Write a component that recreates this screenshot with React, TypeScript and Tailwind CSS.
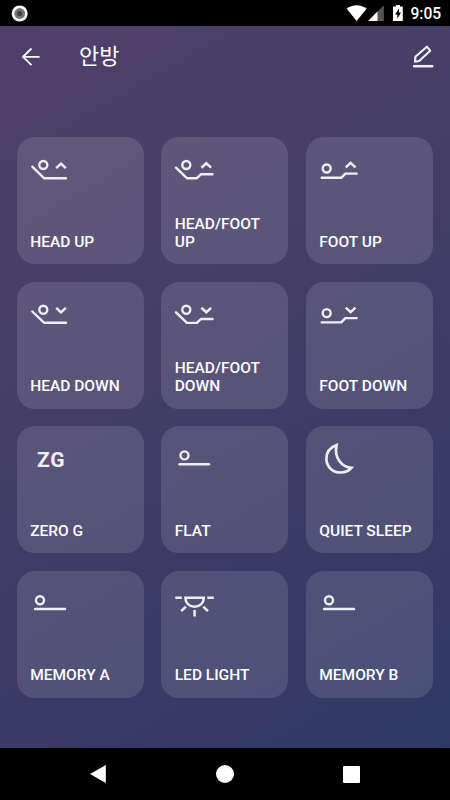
import React from "react";

interface Preset {
  label: string;
  icon: React.ReactNode;
}

interface BedIconProps {
  line: string;
  head: [number, number];
  chevron?: string;
}

const IconFrame: React.FC<{ children: React.ReactNode }> = ({ children }) => (
  <svg
    width="48"
    height="40"
    viewBox="0 0 48 40"
    fill="none"
    stroke="#efedf4"
    strokeWidth="2.4"
    strokeLinecap="round"
    strokeLinejoin="round"
  >
    {children}
  </svg>
);

const BedIcon: React.FC<BedIconProps> = ({ line, head, chevron }) => (
  <IconFrame>
    <circle cx={head[0]} cy={head[1]} r="4" />
    <polyline points={line} />
    {chevron && <polyline points={chevron} strokeLinecap="butt" strokeLinejoin="miter" strokeWidth="2.5" />}
  </IconFrame>
);

const ZeroGIcon = () => (
  <div className="h-10 pt-[10px] pl-[8px] font-[Roboto,sans-serif] text-[21px] leading-6 font-bold tracking-[0.8px] text-[#f1eff6]">
    ZG
  </div>
);

const MoonIcon = () => (
  <IconFrame>
    <path
      d="M18.6 7.1C11.6 9.6 8.2 15 8.4 21.4C8.9 29.1 15 34.7 22.8 34.5C27.6 34.3 31 32.8 33.4 29.9C24.4 29 15.6 20.6 18.6 7.1Z"
      strokeWidth="2.7"
      strokeLinejoin="miter"
    />
  </IconFrame>
);

const LightIcon = () => (
  <IconFrame>
    <g strokeLinecap="butt" strokeLinejoin="miter" strokeWidth="2.5">
      <path d="M2.3 14.7H8.8M34.3 14.7H40.8" />
      <path d="M12.4 14.7H30.8C30.8 20 27 23.8 21.6 23.8S12.4 20 12.4 14.7Z" />
      <path d="M12.9 23.6L8.2 28.2M30.3 23.6L35 28.2M21.6 27V33.4" />
    </g>
  </IconFrame>
);

const presets: Preset[] = [
  {
    label: "HEAD UP",
    icon: <BedIcon line="3.3,17.7 15,29.2 37,29.2" head={[14.3, 16]} chevron="27.2,19.1 32,14.6 36.8,19.1" />,
  },
  {
    label: "HEAD/FOOT UP",
    icon: (
      <BedIcon line="3,18.7 13.9,29.2 23.9,29.2 27.9,25.3 39.5,25.3" head={[13.3, 16]} chevron="28.4,18.7 33.3,14.3 38.1,18.7" />
    ),
  },
  {
    label: "FOOT UP",
    icon: <BedIcon line="3.7,28.8 23.3,28.8 27.3,24.6 38.7,24.6" head={[8.7, 19.5]} chevron="27.8,18.4 32.6,13.9 37.5,18.4" />,
  },
  {
    label: "HEAD DOWN",
    icon: <BedIcon line="3.3,17.5 15,28.7 37,28.7" head={[14.3, 15.8]} chevron="27.2,13.9 32,18.3 36.8,13.9" />,
  },
  {
    label: "HEAD/FOOT DOWN",
    icon: (
      <BedIcon line="3,18.3 13.9,28.9 23.9,28.9 27.9,25 39.5,25" head={[13.3, 15.8]} chevron="28.4,13.8 33.3,18.2 38.1,13.8" />
    ),
  },
  {
    label: "FOOT DOWN",
    icon: <BedIcon line="3.7,28.4 23.3,28.4 27.3,24.1 38.7,24.1" head={[8.7, 19.1]} chevron="27.8,13.6 32.6,18.1 37.5,13.6" />,
  },
  { label: "ZERO G", icon: <ZeroGIcon /> },
  { label: "FLAT", icon: <BedIcon line="6.5,26.2 36,26.2" head={[11.5, 17.4]} /> },
  { label: "QUIET SLEEP", icon: <MoonIcon /> },
  { label: "MEMORY A", icon: <BedIcon line="6,26 36,26" head={[11, 17.2]} /> },
  { label: "LED LIGHT", icon: <LightIcon /> },
  { label: "MEMORY B", icon: <BedIcon line="6,26 36,26" head={[11, 17.2]} /> },
];

const StatusBar = () => (
  <div className="flex h-[26px] items-center justify-between bg-black pr-[9px] pl-[11px]">
    <svg width="17" height="17" viewBox="0 0 17 17">
      <circle cx="8.7" cy="8.5" r="8" fill="#fff" />
      <circle cx="8.7" cy="8.5" r="5.4" fill="#777" />
      <circle cx="8.7" cy="8.5" r="2.6" fill="#444" />
    </svg>
    <div className="flex items-center">
      <svg width="64" height="26" viewBox="0 0 64 26">
        <path d="M0.7 8.8C6 4 15.3 4 20.6 8.8L10.6 21Z" fill="#fff" />
        <path d="M37.8 5.3V21H22.1Z" fill="#555" />
        <path d="M31.5 11.6V21H22.1Z" fill="#fff" />
        <path d="M50 5H54V6.6H56.8V21H47V6.6H50Z" fill="#fff" />
        <path d="M53.1 8.2L49.1 14.6H51.4V18.8L55 12.4H52.9Z" fill="#000" />
      </svg>
      <span className="w-[31px] pt-[2px] pl-[0.5px] text-[15.6px] leading-6 font-medium whitespace-nowrap text-white">
        9:05
      </span>
    </div>
  </div>
);

const Header = () => (
  <header className="flex h-[62px] items-center pr-4 pl-[21px]">
    <svg width="20" height="20" viewBox="0 0 20 20" fill="none" stroke="#fff" strokeWidth="1.8">
      <path d="M18.6 9.8H2M10.5 1.5L2 9.8L10.5 18.1" />
    </svg>
    <h1 className="ml-[38px] flex-1 pb-[4px] font-['Noto_Sans_CJK_KR',sans-serif] text-[21.9px] leading-8 text-white">
      안방
    </h1>
    <svg width="22" height="26" viewBox="0 0 22 26" fill="none" stroke="#f1eff6" strokeWidth="2.1">
      <path d="M3 17.6L3.4 12.7L14.9 2.7L18.2 6.7L7.1 17Z" strokeLinejoin="round" />
      <path d="M1.1 22.2H21.3" strokeWidth="2.5" />
    </svg>
  </header>
);

const PresetCard: React.FC<Preset> = ({ label, icon }) => (
  <button className="flex h-[127px] flex-col justify-between rounded-[18px] bg-white/12 px-3 pt-3 pb-[13.5px] text-left">
    {icon}
    <span className="pl-[1.3px] text-[15.5px] leading-[18px] font-medium text-white">{label}</span>
  </button>
);

const NavBar = () => (
  <nav className="flex h-[52px] items-center justify-between bg-black pr-[90px] pl-[89px]">
    <svg width="18" height="20" viewBox="0 0 18 20" fill="#fff">
      <path d="M1 10L16.8 1V19Z" />
    </svg>
    <div className="size-[18px] rounded-full bg-white" />
    <div className="size-[17px] rounded-[1px] bg-white" />
  </nav>
);

const App = () => (
  <div className="flex h-[800px] w-[450px] flex-col overflow-hidden bg-black font-[Roboto,sans-serif]">
    <StatusBar />
    <main className="flex-1 bg-[linear-gradient(150deg,#4f4169_0%,#443e67_40%,#3c3a66_68%,#2f3967_100%)]">
      <Header />
      <div className="mt-[49px] grid grid-cols-3 gap-x-[17.6px] gap-y-[17.5px] pr-[17px] pl-[16.9px]">
        {presets.map((preset) => (
          <PresetCard key={preset.label} {...preset} />
        ))}
      </div>
    </main>
    <NavBar />
  </div>
);

export default App;
